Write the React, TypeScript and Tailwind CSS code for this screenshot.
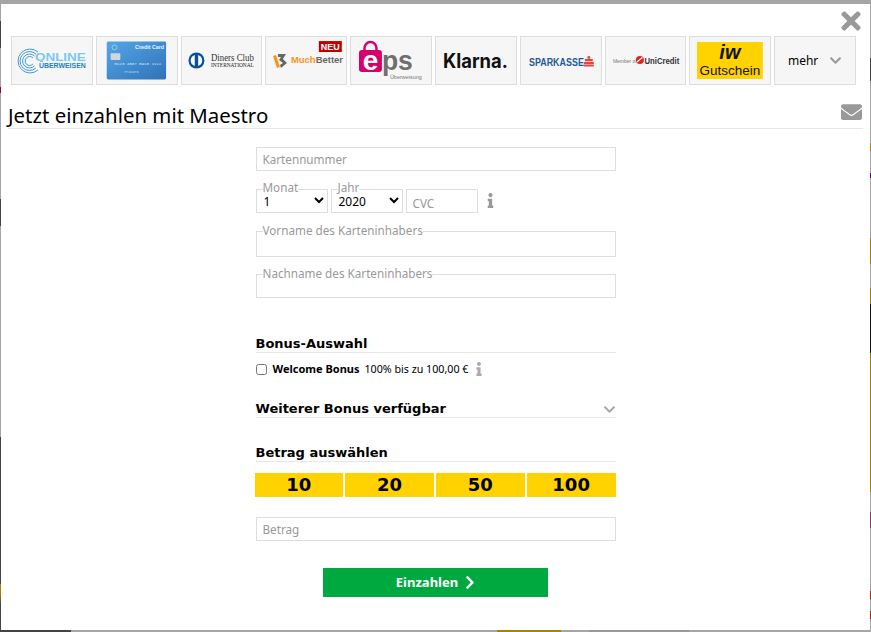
import { FaChevronDown, FaChevronRight, FaEnvelope, FaInfo, FaTimes } from "react-icons/fa";

const sans = "font-['Noto_Sans',sans-serif]";
const bold = "font-['DejaVu_Sans',sans-serif] font-bold";

function OnlineLogo() {
  return (
    <svg viewBox="0 0 80 47" className="h-full w-full">
      <g fill="none" stroke="#3f9ad6" strokeWidth="1">
        <path d="M26 15a12 12 0 1 0 0 18" />
        <path d="M24 17a9.500 9.500 0 1 0 0 14" />
        <path d="M22.500 19a7 7 0 1 0 0 10" />
        <path d="M21 21a4.500 4.500 0 1 0 0 6" />
      </g>
      <text x="23" y="24" fontSize="11" fontWeight="700" fill="#7cc8ee" textLength="51" lengthAdjust="spacingAndGlyphs" fontFamily="Liberation Sans">ONLINE</text>
      <text x="27" y="31" fontSize="7" fontWeight="700" fill="#1f7fc4" textLength="47" lengthAdjust="spacingAndGlyphs" fontFamily="Liberation Sans">ÜBERWEISEN</text>
    </svg>
  );
}

function CardLogo() {
  return (
    <svg viewBox="0 0 82 47" className="h-full w-full">
      <defs>
        <linearGradient id="card" x1="0" y1="0" x2="1" y2="1">
          <stop offset="0" stopColor="#54a6e6" />
          <stop offset="1" stopColor="#2f72b8" />
        </linearGradient>
      </defs>
      <rect x="10" y="4" width="61" height="39" rx="1.500" fill="url(#card)" />
      <circle cx="18" cy="10" r="2.500" fill="none" stroke="#a8d4f2" strokeWidth="0.800" />
      <rect x="14" y="16" width="10" height="7" rx="1" fill="#d0d6db" />
      <text x="69" y="12" fontSize="5.500" fontWeight="700" fill="#eaf4fb" textAnchor="end" fontFamily="Liberation Sans">Credit Card</text>
      <text x="18" y="28" fontSize="4.200" fill="#dcebf7" textLength="48" fontFamily="Liberation Mono">0123 4567 8910 1112</text>
      <text x="28" y="36" fontSize="3.500" fill="#cfe3f3" fontFamily="Liberation Mono">Tricoro</text>
    </svg>
  );
}

function DinersLogo() {
  return (
    <svg viewBox="0 0 80 47" className="h-full w-full">
      <circle cx="14.500" cy="23.500" r="8" fill="#0a4f9e" />
      <circle cx="14.500" cy="23.500" r="5.800" fill="#fff" />
      <rect x="12.800" y="17" width="3.400" height="13" fill="#0a4f9e" />
      <text x="29" y="24" fontSize="10" fill="#333" textLength="43" lengthAdjust="spacingAndGlyphs" fontFamily="Liberation Serif">Diners Club</text>
      <text x="29" y="30" fontSize="5.500" fill="#222" textLength="43" lengthAdjust="spacingAndGlyphs" fontFamily="Liberation Serif">INTERNATIONAL</text>
    </svg>
  );
}

function MuchBetterLogo() {
  return (
    <svg viewBox="0 0 80 47" className="h-full w-full">
      <path d="M7 19l3-1 4 12-3 1z" fill="#f7941e" />
      <path d="M12 17h8l-3 5 4 4-6 5-1-3 3-2-4-3 2-3h-3z" fill="#666" />
      <text x="25" y="26" fontSize="9.500" fontWeight="700" fontFamily="Liberation Sans">
        <tspan fill="#f7941e">Much</tspan>
        <tspan fill="#666">Better</tspan>
      </text>
      <rect x="53" y="4" width="23" height="11" fill="#c00000" />
      <text x="64.500" y="13" fontSize="9" fontWeight="700" fill="#fff" textAnchor="middle" fontFamily="Liberation Sans">NEU</text>
    </svg>
  );
}

function EpsLogo() {
  return (
    <svg viewBox="0 0 80 47" className="h-full w-full">
      <path d="M13.500 13v-2a6 6 0 0 1 12 0v2" fill="none" stroke="#d5006d" strokeWidth="2.500" />
      <rect x="8" y="13" width="23" height="22" rx="3" fill="#d5006d" />
      <text x="19.500" y="33" fontSize="28" fontWeight="700" fill="#fff" textAnchor="middle" fontFamily="Liberation Sans">e</text>
      <text x="31" y="33" fontSize="27" fontWeight="700" fill="#6f6f6f" textLength="31" lengthAdjust="spacingAndGlyphs" fontFamily="Liberation Sans">ps</text>
      <text x="39" y="42" fontSize="5.500" fill="#777" textLength="32" lengthAdjust="spacingAndGlyphs" fontFamily="Liberation Sans">Überweisung</text>
    </svg>
  );
}

function KlarnaLogo() {
  return (
    <svg viewBox="0 0 80 47" className="h-full w-full">
      <text x="7" y="31" fontSize="20" fontWeight="700" fill="#111" textLength="65" lengthAdjust="spacingAndGlyphs" fontFamily="Inter">Klarna.</text>
    </svg>
  );
}

function SparkasseLogo() {
  return (
    <svg viewBox="0 0 80 47" className="h-full w-full">
      <text x="8" y="29" fontSize="11" fontWeight="700" fill="#1d5b9c" textLength="55" lengthAdjust="spacingAndGlyphs" fontFamily="Liberation Sans">SPARKASSE</text>
      <circle cx="68" cy="20.500" r="1.500" fill="#e8443a" />
      <rect x="64" y="22" width="8" height="2.200" fill="#e8443a" />
      <rect x="63" y="25" width="10" height="2" fill="#e8443a" />
      <rect x="63" y="27.500" width="10" height="2" fill="#e8443a" />
    </svg>
  );
}

function UniCreditLogo() {
  return (
    <svg viewBox="0 0 80 47" className="h-full w-full">
      <text x="7" y="26" fontSize="5" fill="#777" fontFamily="Liberation Sans">Member of</text>
      <circle cx="34" cy="23" r="4" fill="#e2231a" />
      <path d="M31 25l5.500-4.500" stroke="#fff" strokeWidth="1.200" />
      <text x="38.500" y="27" fontSize="9" fontWeight="700" fill="#333" textLength="35" lengthAdjust="spacingAndGlyphs" fontFamily="Liberation Sans">UniCredit</text>
    </svg>
  );
}

function GutscheinLogo() {
  return (
    <svg viewBox="0 0 80 47" className="h-full w-full">
      <rect x="7" y="5" width="66" height="37" fill="#ffd200" />
      <text x="40" y="22" fontSize="20" fontWeight="700" fontStyle="italic" fill="#111" textAnchor="middle" fontFamily="Liberation Sans">iw</text>
      <text x="40" y="38" fontSize="13.500" fill="#111" textAnchor="middle" fontFamily="Liberation Sans">Gutschein</text>
    </svg>
  );
}

const logos = [OnlineLogo, CardLogo, DinersLogo, MuchBetterLogo, EpsLogo, KlarnaLogo, SparkasseLogo, UniCreditLogo, GutscheinLogo];

function Heading({ children }: { children: React.ReactNode }) {
  return <h3 className={`${bold} text-[13px] leading-[14px] text-black border-b border-[#e8e8e8] pb-[1px]`}>{children}</h3>;
}

function TextField({ placeholder, extra = "" }: { placeholder: string; extra?: string }) {
  return (
    <input
      placeholder={placeholder}
      className={`${sans} ${extra} block h-[24px] w-full border border-[#ddd] bg-white px-[6px] text-[11.700px] outline-none placeholder:text-[#999]`}
    />
  );
}

function LegendField({ label, height }: { label: string; height: string }) {
  return (
    <fieldset className={`${height} w-full border border-[#ddd] pl-[6px]`}>
      <legend className={`${sans} relative -top-px text-[11.700px] leading-[14px] text-[#999]`}>{label}</legend>
    </fieldset>
  );
}

function SelectField({ label, value, options }: { label: string; value: string; options: string[] }) {
  return (
    <fieldset className="h-[31px] w-[72px] border border-[#ddd] pl-[6px]">
      <legend className={`${sans} relative -top-[2px] text-[11.700px] leading-[14px] text-[#999]`}>{label}</legend>
      <select
        defaultValue={value}
        className={`${sans} -ml-[3px] -mt-[4px] block h-[17px] w-[67px] bg-transparent text-[12px] leading-[14px] text-black outline-none`}
      >
        {options.map((o) => (
          <option key={o}>{o}</option>
        ))}
      </select>
    </fieldset>
  );
}

export default function App() {
  return (
    <div className="flex h-[632px] w-[871px] flex-col overflow-hidden bg-[#a5a5a5]">
      <div className="h-[4px] shrink-0" />
      <div className="flex min-h-0 flex-1">
        {/* backdrop page showing through at the edges */}
        <div className="w-px shrink-0 bg-[linear-gradient(#a5a5a5_17px,#444_17px,#444_44px,#a5a5a5_44px,#a5a5a5_83px,#8a0050_83px,#8a0050_89px,#a5a5a5_89px,#a5a5a5_195px,#444_195px,#444_222px,#a5a5a5_222px,#a5a5a5_433px,#444_433px,#444_580px,#a88300_580px,#a88300_590px,#444_600px)]" />
        <div className="flex min-w-0 flex-1 flex-col bg-white">
          <div className="flex h-[32px] shrink-0 justify-end pr-[9px] pt-[3px]">
            <FaTimes className="h-[28px] w-[20px] text-[#999]" />
          </div>

          <div className="ml-[10px] grid h-[49px] w-[845px] shrink-0 grid-cols-10 gap-[3px]">
            {logos.map((Logo, i) => (
              <div key={i} className="border border-[#ddd] bg-[#f6f6f6]">
                <Logo />
              </div>
            ))}
            <div className="flex items-center justify-center gap-[11px] border border-[#ddd] bg-[#f6f6f6]">
              <span className={`${sans} text-[12px] text-black`}>mehr</span>
              <FaChevronDown className="h-[13px] w-[13px] text-[#999]" />
            </div>
          </div>

          <div className="mx-[7px] flex h-[44px] shrink-0 items-end justify-between border-b border-[#e8e8e8]">
            <h1 className={`${sans} text-[20.400px] leading-[26px] text-black`}>Jetzt einzahlen mit Maestro</h1>
            <FaEnvelope className="mb-[5px] mr-[1px] h-[22px] w-[21px] text-[#999]" />
          </div>

          <form className="mx-auto w-[360px] pt-[18px]">
            <TextField placeholder="Kartennummer" />

            <div className="mt-[11px] flex items-end gap-[3px]">
              <SelectField label="Monat" value="1" options={["1", "2", "3", "4", "5", "6", "7", "8", "9", "10", "11", "12"]} />
              <SelectField label="Jahr" value="2020" options={["2020", "2021", "2022", "2023", "2024", "2025"]} />
              <div className="w-[72px]">
                <TextField placeholder="CVC" extra="pt-[3px]" />
              </div>
              <FaInfo className="mb-[5px] ml-[5px] h-[15px] w-[9px] text-[#999]" />
            </div>

            <div className="mt-[11px]">
              <LegendField label="Vorname des Karteninhabers" height="h-[33px]" />
            </div>
            <div className="mt-[10px]">
              <LegendField label="Nachname des Karteninhabers" height="h-[31px]" />
            </div>

            <div className="mt-[39px]">
              <Heading>Bonus-Auswahl</Heading>
            </div>
            <label className="mt-[8px] flex h-[16px] items-center">
              <input type="checkbox" className="m-0 h-[11px] w-[11px]" />
              <span className={`${sans} ml-[6px] text-[11px] font-bold text-black`}>Welcome Bonus</span>
              <span className={`${sans} ml-[5px] text-[10.700px] text-black`}>100% bis zu 100,00 €</span>
              <FaInfo className="ml-[7px] h-[14px] w-[8px] text-[#aaa]" />
            </label>

            <div className="relative mt-[25px]">
              <Heading>Weiterer Bonus verfügbar</Heading>
              <FaChevronDown className="absolute right-0 top-[1px] h-[13px] w-[13px] text-[#aaa]" />
            </div>

            <div className="mt-[28px]">
              <Heading>Betrag auswählen</Heading>
            </div>
            <div className="-ml-px mt-[11px] grid h-[24px] w-[361px] grid-cols-4 gap-[2px]">
              {["10", "20", "50", "100"].map((v) => (
                <button
                  key={v}
                  type="button"
                  className={`${bold} bg-[#ffd200] text-[18px] leading-[24px] text-black`}
                >
                  {v}
                </button>
              ))}
            </div>

            <div className="mt-[20px]">
              <TextField placeholder="Betrag" />
            </div>

            <button
              type="button"
              className={`${sans} mx-auto mt-[27px] flex h-[29px] w-[225px] items-center justify-center gap-[7px] bg-[#00a93f] text-[13px] font-bold text-white`}
            >
              Einzahlen
              <FaChevronRight className="h-[15px] w-[10px]" />
            </button>
          </form>
        </div>
        <div className="w-px shrink-0 bg-[linear-gradient(#a5a5a5_54px,#444_54px,#444_77px,#a5a5a5_77px,#a5a5a5_139px,#a88300_139px,#a88300_147px,#a5a5a5_147px,#a5a5a5_169px,#60005a_169px,#60005a_174px,#a5a5a5_174px,#a5a5a5_234px,#a88300_234px,#a88300_260px,#a5a5a5_260px,#a5a5a5_284px,#a88300_284px,#a88300_300px,#111_300px,#111_349px,#a88300_349px,#a88300_488px,#a5a5a5_488px,#a5a5a5_508px,#a03060_508px,#a03060_524px,#a5a5a5_524px,#a5a5a5_587px,#b02020_587px,#b02020_595px,#a5a5a5_595px,#a5a5a5_607px,#b02020_607px,#b02020_615px,#a5a5a5_615px)]" />
      </div>
      <div className="h-[2px] shrink-0 bg-[linear-gradient(90deg,#444_71px,#a5a5a5_71px,#a5a5a5_497px,#a88300_497px,#a88300_561px,#a5a5a5_561px,#a5a5a5_589px,#999_589px,#999_689px,#a5a5a5_689px)]" />
    </div>
  );
}
